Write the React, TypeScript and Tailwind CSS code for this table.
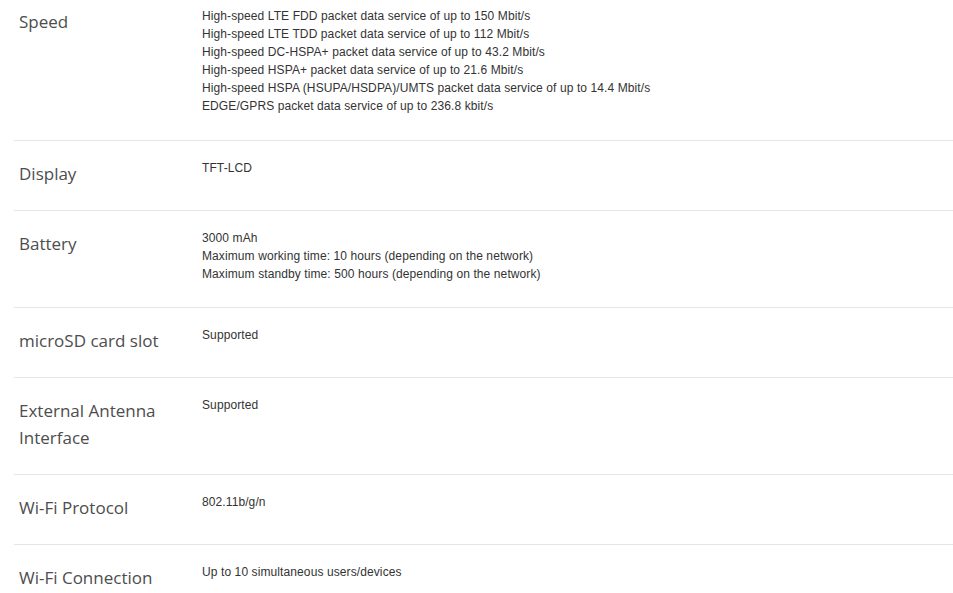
import React from 'react';

type Spec = { label: string[]; lines: string[] };

const specs: Spec[] = [
  {
    label: ['Speed'],
    lines: [
      'High-speed LTE FDD packet data service of up to 150 Mbit/s',
      'High-speed LTE TDD packet data service of up to 112 Mbit/s',
      'High-speed DC-HSPA+ packet data service of up to 43.2 Mbit/s',
      'High-speed HSPA+ packet data service of up to 21.6 Mbit/s',
      'High-speed HSPA (HSUPA/HSDPA)/UMTS packet data service of up to 14.4 Mbit/s',
      'EDGE/GPRS packet data service of up to 236.8 kbit/s',
    ],
  },
  { label: ['Display'], lines: ['TFT-LCD'] },
  {
    label: ['Battery'],
    lines: [
      '3000 mAh',
      'Maximum working time: 10 hours (depending on the network)',
      'Maximum standby time: 500 hours (depending on the network)',
    ],
  },
  { label: ['microSD card slot'], lines: ['Supported'] },
  { label: ['External Antenna', 'Interface'], lines: ['Supported'] },
  { label: ['Wi-Fi Protocol'], lines: ['802.11b/g/n'] },
  { label: ['Wi-Fi Connection'], lines: ['Up to 10 simultaneous users/devices'] },
];

function SpecRow({ spec, first }: { spec: Spec; first: boolean }) {
  return (
    <div className={first ? 'flex' : 'flex border-t border-[#e6e6e6]'}>
      <div
        className={`w-[188px] shrink-0 pl-[5px] pb-[23px] text-[17px] leading-[27px] text-[#4d4d4d] font-['Open_Sans',sans-serif] ${
          first ? 'pt-[8px]' : 'pt-[19px]'
        }`}
      >
        {spec.label.map((l) => (
          <div key={l}>{l}</div>
        ))}
      </div>
      <div
        className={`text-[12px] tracking-[0.1px] leading-[18px] text-[#333] font-['Liberation_Sans',Arial,sans-serif] ${
          first ? 'pt-[7px] pb-[25px]' : 'pt-[18px] pb-[24px]'
        }`}
      >
        {spec.lines.map((l) => (
          <div key={l}>{l}</div>
        ))}
      </div>
    </div>
  );
}

export default function App() {
  return (
    <div className="w-[953px] h-[593px] overflow-hidden bg-white pl-[14px]">
      {specs.map((s, i) => (
        <SpecRow key={s.label[0]} spec={s} first={i === 0} />
      ))}
    </div>
  );
}
